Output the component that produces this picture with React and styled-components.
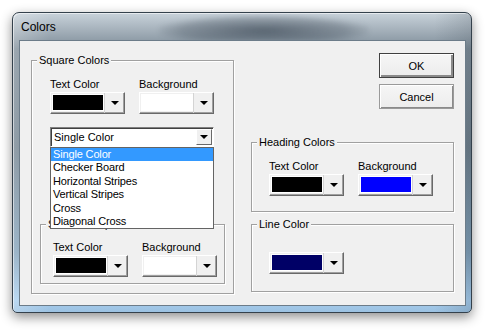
import React from 'react';
import styled, { createGlobalStyle } from 'styled-components';

const GlobalStyle = createGlobalStyle`
  html, body {
    margin: 0;
    padding: 0;
    background: #ffffff;
  }
  body {
    font-family: "Liberation Sans", Arial, sans-serif;
    font-size: 11px;
    color: #000;
  }
`;

const patterns = [
  'Single Color',
  'Checker Board',
  'Horizontal Stripes',
  'Vertical Stripes',
  'Cross',
  'Diagonal Cross',
];

function ColorCombo({ color }) {
  return (
    <Combo>
      <Swatch color={color} />
      <ArrowBtn>
        <Arrow />
      </ArrowBtn>
    </Combo>
  );
}

function Picker({ label, color }) {
  return (
    <PickerBox>
      <Label>{label}</Label>
      <ColorCombo color={color} />
    </PickerBox>
  );
}

export default function App() {
  return (
    <Page>
      <GlobalStyle />
      <Window>
        <TitleBar>
          <Watermark aria-hidden="true" />
          <Title>Colors</Title>
        </TitleBar>
        <Client>
          {/* 왼쪽: Square Colors */}
          <Group width={203} height={234}>
            <Legend>Square Colors</Legend>
            <PickerRow pad="17px 0 0 18px">
              <Picker label="Text Color" color="#000000" />
              <Picker label="Background" color="#ffffff" />
            </PickerRow>
            <SelectWrap>
              <Select>
                <SelectText>Single Color</SelectText>
                <SelectBtn>
                  <Arrow />
                </SelectBtn>
              </Select>
              <List>
                {patterns.map((p, i) => (
                  <Item key={p} active={i === 0}>
                    {p}
                  </Item>
                ))}
              </List>
            </SelectWrap>
            <InnerGroup>
              <Legend>Selected Square</Legend>
              <PickerRow pad="16px 0 0 12px">
                <Picker label="Text Color" color="#000000" />
                <Picker label="Background" color="#ffffff" />
              </PickerRow>
            </InnerGroup>
          </Group>

          {/* 오른쪽: 버튼, Heading, Line */}
          <RightCol>
            <Button isDefault>OK</Button>
            <Button>Cancel</Button>
            <Group width={203} height={70} top={33}>
              <Legend>Heading Colors</Legend>
              <PickerRow pad="17px 0 0 17px">
                <Picker label="Text Color" color="#000000" />
                <Picker label="Background" color="#0000ff" />
              </PickerRow>
            </Group>
            <Group width={203} height={68} top={12}>
              <Legend>Line Color</Legend>
              <PickerRow pad="27px 0 0 17px">
                <ColorCombo color="#000066" />
              </PickerRow>
            </Group>
          </RightCol>
        </Client>
      </Window>
    </Page>
  );
}

const Page = styled.div`
  padding: 12px;
  width: 492px;
  height: 333px;
  box-sizing: border-box;
  overflow: hidden;
`;

const Window = styled.div`
  position: relative;
  width: 460px;
  height: 301px;
  box-sizing: border-box;
  border: 1px solid #34414c;
  border-radius: 7px 7px 5px 5px;
  padding: 0 5px 6px 6px;
  display: flex;
  flex-direction: column;
  background:
    linear-gradient(90deg, rgba(255, 255, 255, 0.25) 0%, rgba(255, 255, 255, 0) 8%, rgba(0, 0, 0, 0) 92%, rgba(30, 40, 50, 0.15) 100%),
    linear-gradient(180deg, #c8d2da 0%, #a3afb9 6%, #7d8c98 12%, #6e7f8c 45%, #7f9fb8 80%, #a6cdee 96%, #9cc2e2 100%);
  box-shadow: 0 4px 12px rgba(0, 0, 0, 0.45), inset 1px 1px 0 rgba(255, 255, 255, 0.55);
`;

const TitleBar = styled.div`
  position: relative;
  height: 27px;
  display: flex;
  align-items: center;
  padding-left: 2px;
  overflow: hidden;
`;

const Title = styled.span`
  position: relative;
  z-index: 1;
  font-size: 12px;
  color: #000;
  padding-top: 1px;
`;

/* 타이틀 바 뒤로 비치는 흐릿한 배경 */
const Watermark = styled.div`
  position: absolute;
  left: 140px;
  top: 2px;
  width: 210px;
  height: 26px;
  background:
    radial-gradient(ellipse at 50% 60%, rgba(30, 42, 56, 0.55) 0%, rgba(30, 42, 56, 0.25) 55%, rgba(30, 42, 56, 0) 75%);
  filter: blur(2px);
`;

const Client = styled.div`
  flex: 1;
  display: flex;
  gap: 17px;
  padding: 0 0 0 11px;
  border: 1px solid #6c7c89;
  background: #f0f0f0;
`;

const Group = styled.div`
  position: relative;
  box-sizing: border-box;
  width: ${p => p.width}px;
  height: ${p => p.height}px;
  margin-top: ${p => (p.top === undefined ? 19 : p.top)}px;
  border: 1px solid #a0a0a0;
  box-shadow: inset 1px 1px 0 #ffffff, 1px 1px 0 #ffffff;
  display: flex;
  flex-direction: column;
  flex-shrink: 0;
`;

const InnerGroup = styled.div`
  position: relative;
  box-sizing: border-box;
  width: 185px;
  height: 60px;
  margin: 77px 0 0 8px;
  border: 1px solid #a0a0a0;
  box-shadow: inset 1px 1px 0 #ffffff, 1px 1px 0 #ffffff;
`;

const Legend = styled.span`
  position: absolute;
  top: -7px;
  left: 5px;
  padding: 0 2px;
  line-height: 13px;
  background: #f0f0f0;
  white-space: nowrap;
`;

const PickerRow = styled.div`
  display: flex;
  gap: 14px;
  padding: ${p => p.pad};
`;

const PickerBox = styled.div`
  display: flex;
  flex-direction: column;
`;

const Label = styled.span`
  line-height: 13px;
  margin-bottom: 1px;
`;

const Combo = styled.div`
  box-sizing: border-box;
  width: 75px;
  height: 22px;
  display: flex;
  background: #f0f0f0;
  border-top: 1px solid #ffffff;
  border-left: 1px solid #ffffff;
  border-right: 1px solid #696969;
  border-bottom: 1px solid #696969;
  box-shadow: inset -1px -1px 0 #a0a0a0;
`;

const Swatch = styled.div`
  flex: 1;
  margin: 1px 0 2px 1px;
  background: ${p => p.color};
  border: 1px solid #ffffff;
`;

const ArrowBtn = styled.div`
  width: 19px;
  display: flex;
  align-items: center;
  justify-content: center;
  border-left: 1px solid #d4d4d4;
`;

const Arrow = styled.span`
  width: 0;
  height: 0;
  border-left: 4px solid transparent;
  border-right: 4px solid transparent;
  border-top: 4px solid #000;
`;

const SelectWrap = styled.div`
  position: relative;
  margin: 13px 0 0 18px;
  width: 164px;
`;

const Select = styled.div`
  box-sizing: border-box;
  height: 20px;
  display: flex;
  align-items: center;
  background: #fff;
  border-top: 1px solid #808080;
  border-left: 1px solid #808080;
  border-right: 1px solid #ffffff;
  border-bottom: 1px solid #ffffff;
  box-shadow: inset 1px 1px 0 #404040;
`;

const SelectText = styled.span`
  flex: 1;
  padding-left: 3px;
  line-height: 13px;
`;

const SelectBtn = styled.div`
  box-sizing: border-box;
  width: 16px;
  height: 16px;
  margin-right: 1px;
  display: flex;
  align-items: center;
  justify-content: center;
  background: #f0f0f0;
  border-top: 1px solid #ffffff;
  border-left: 1px solid #ffffff;
  border-right: 1px solid #696969;
  border-bottom: 1px solid #696969;
`;

const List = styled.div`
  position: absolute;
  z-index: 2;
  top: 20px;
  left: 0;
  right: 0;
  background: #fff;
  border: 1px solid #646464;
`;

const Item = styled.div`
  height: 13.4px;
  line-height: 13px;
  padding-left: 2px;
  white-space: nowrap;
  font-size: 11px;
  letter-spacing: -0.15px;
  background: ${p => (p.active ? '#3399ff' : 'transparent')};
  color: ${p => (p.active ? '#ffffff' : '#000000')};
`;

const RightCol = styled.div`
  display: flex;
  flex-direction: column;
  align-items: flex-end;
  padding-top: 12px;
`;

const Button = styled.button`
  box-sizing: border-box;
  width: 75px;
  height: 25px;
  margin-bottom: 6px;
  font-family: "Liberation Sans", Arial, sans-serif;
  font-size: 11px;
  color: #000;
  background: linear-gradient(180deg, #f6f6f6 0%, #ececec 100%);
  border: 1px solid ${p => (p.isDefault ? '#404040' : '#9a9a9a')};
  box-shadow: ${p =>
    p.isDefault
      ? 'inset 1px 1px 0 #ffffff, inset -2px -2px 0 #8a8a8a'
      : 'inset 1px 1px 0 #ffffff, inset -1px -1px 0 #8a8a8a'};
  padding: 0;
  &:last-of-type {
    margin-bottom: 0;
  }
`;
